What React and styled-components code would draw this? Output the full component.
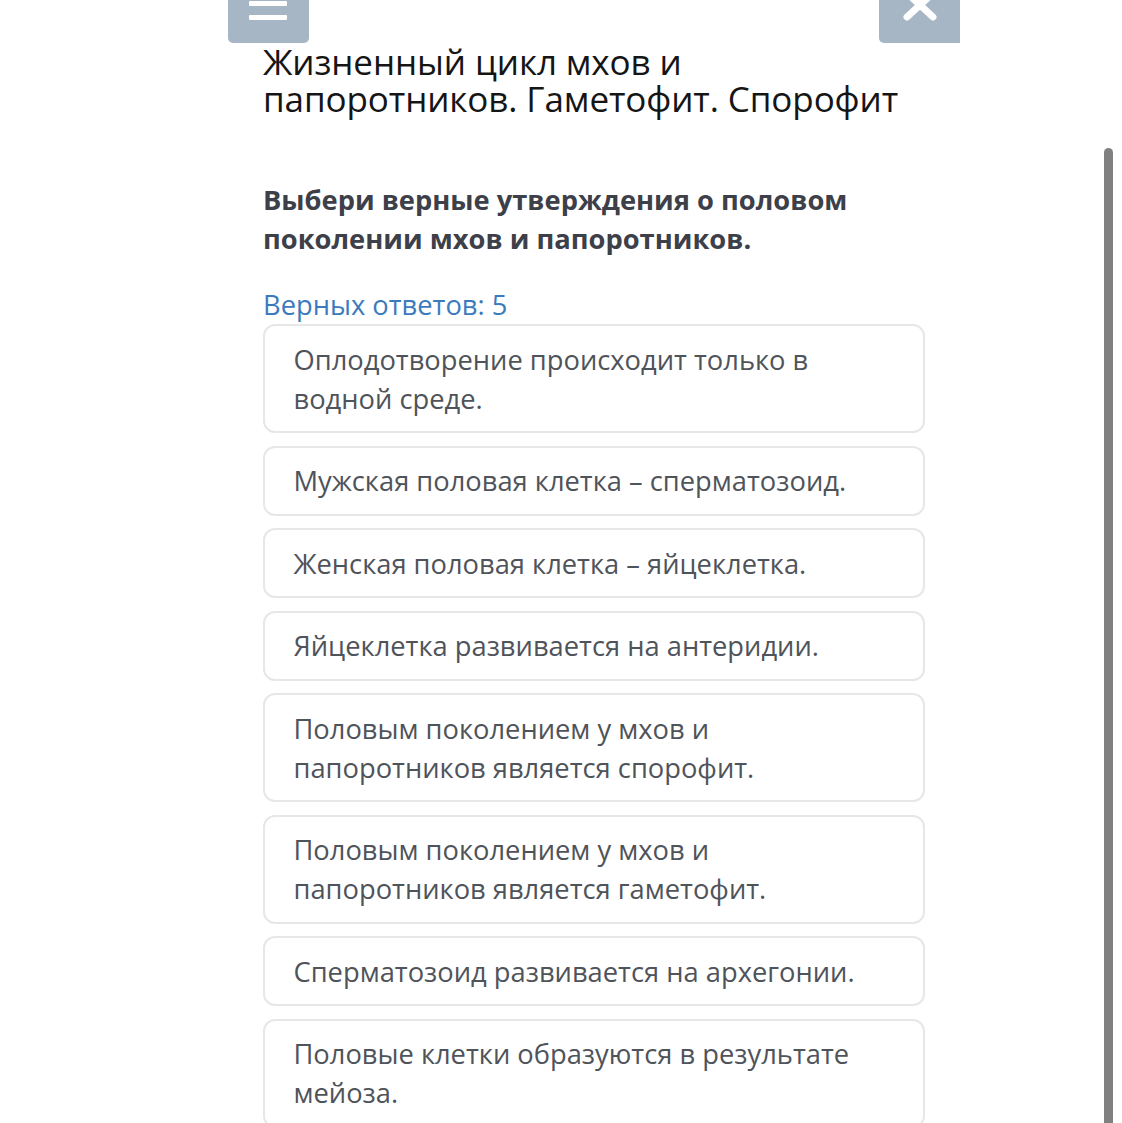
import React from "react";
import styled, { createGlobalStyle } from "styled-components";

const Global = createGlobalStyle`
  html, body { margin: 0; padding: 0; background: #fff; }
  body { font-family: "Open Sans", "Noto Sans", sans-serif; }
  * { box-sizing: border-box; }
`;

const Page = styled.div`
  position: relative;
  width: 1122px;
  height: 1123px;
  overflow: hidden;
  background: #fff;
`;

const TopBar = styled.div`
  display: flex;
  justify-content: space-between;
  width: 732px;
  margin-left: 228px;
  height: 43px;
`;

const TopButton = styled.div`
  width: 81px;
  height: 43px;
  background: #a7b6c4;
  border-radius: 0 0 ${(p) => (p.$right ? "0" : "5px")} 5px;
  display: flex;
  align-items: flex-end;
  justify-content: center;
  overflow: hidden;
`;

const Content = styled.div`
  width: 662px;
  margin-left: 263px;
  display: flex;
  flex-direction: column;
`;

const Title = styled.h1`
  margin: 0;
  font-weight: 400;
  font-size: 35px;
  line-height: 37px;
  color: #151515;
  letter-spacing: -0.1px;
`;

const Question = styled.h2`
  margin: 63px 0 0;
  font-weight: 700;
  font-size: 27.3px;
  line-height: 39px;
  color: #3d4049;
`;

const Counter = styled.div`
  margin-top: 30px;
  font-size: 27.3px;
  line-height: 34px;
  color: #3b7bbd;
`;

const Options = styled.div`
  display: flex;
  flex-direction: column;
  gap: 12.5px;
  margin-top: 2px;
`;

const Option = styled.div`
  border: 2px solid #e7e7e7;
  border-radius: 12px;
  padding: 13.5px 28px 13.5px 28.5px;
  font-size: 27.3px;
  line-height: 39px;
  color: #4f535a;
`;

const Scrollbar = styled.div`
  position: absolute;
  left: 1104px;
  top: 148px;
  width: 9px;
  bottom: 0;
  background: #808080;
  border-radius: 5px 5px 0 0;
`;

const options = [
  "Оплодотворение происходит только в водной среде.",
  "Мужская половая клетка – сперматозоид.",
  "Женская половая клетка – яйцеклетка.",
  "Яйцеклетка развивается на антеридии.",
  "Половым поколением у мхов и папоротников является спорофит.",
  "Половым поколением у мхов и папоротников является гаметофит.",
  "Сперматозоид развивается на архегонии.",
  "Половые клетки образуются в результате мейоза.",
];

export default function App() {
  return (
    <Page>
      <Global />
      <TopBar>
        <TopButton>
          <svg width="40" height="22" viewBox="0 0 40 22" style={{ marginBottom: 20 }}>
            <rect x="0" y="0" width="38" height="5" rx="1" fill="#fff" />
            <rect x="0" y="14" width="38" height="5" rx="1" fill="#fff" />
          </svg>
        </TopButton>
        <TopButton $right>
          <svg width="34" height="22" viewBox="0 0 34 22" style={{ marginBottom: 22 }}>
            <path d="M4 -6 L30 18 M30 -6 L4 18" stroke="#fff" strokeWidth="7" strokeLinecap="round" />
          </svg>
        </TopButton>
      </TopBar>
      <Content>
        <Title>
          Жизненный цикл мхов и
          <br />
          папоротников. Гаметофит. Спорофит
        </Title>
        <Question>
          Выбери верные утверждения о половом поколении мхов и папоротников.
        </Question>
        <Counter>Верных ответов: 5</Counter>
        <Options>
          {options.map((o) => (
            <Option key={o}>{o}</Option>
          ))}
        </Options>
      </Content>
      <Scrollbar />
    </Page>
  );
}
